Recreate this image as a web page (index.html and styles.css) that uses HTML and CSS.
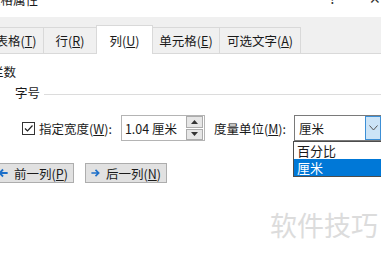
FILE: index.html
```html
<!DOCTYPE html>
<html lang="zh-CN">
<head>
  <meta charset="UTF-8" />
  <title>表格属性</title>
  <link rel="stylesheet" href="styles.css">
</head>
<body>
  <div class="dialog">
    <div class="titlebar">
      <span class="title">表格属性</span>
      <span class="help">?</span>
      <span class="close">✕</span>
    </div>

    <div class="tabs-band">
      <div class="tab t1">表格(<u>T</u>)</div>
      <div class="tab t2">行(<u>R</u>)</div>
      <div class="tab t3 active">列(<u>U</u>)</div>
      <div class="tab t4">单元格(<u>E</u>)</div>
      <div class="tab t5">可选文字(<u>A</u>)</div>
    </div>

    <div class="panel">
      <div class="heading">栏数</div>

      <div class="group">
        <span>字号</span>
        <span class="rule"></span>
      </div>

      <div class="size-row">
        <span class="check">
          <svg width="11" height="11" viewBox="0 0 11 11"><path d="M2 5.5 L4.5 8 L9.5 2.5" fill="none" stroke="#222" stroke-width="1.2"/></svg>
        </span>
        <span class="label">指定宽度(<u>W</u>):</span>
        <div class="spin-box">
          <span class="value">1.04 厘米</span>
          <div class="spinner">
            <span class="spin-btn"><svg width="7" height="4" viewBox="0 0 7 4"><path d="M0 4 L3.5 0 L7 4 Z" fill="#333"/></svg></span>
            <span class="spin-btn"><svg width="7" height="4" viewBox="0 0 7 4"><path d="M0 0 L3.5 4 L7 0 Z" fill="#333"/></svg></span>
          </div>
        </div>
        <span class="label unit-label">度量单位(<u>M</u>):</span>
        <div class="select">
          <span class="value">厘米</span>
          <span class="select-btn">
            <svg width="9" height="6" viewBox="0 0 9 6"><path d="M0.5 0.5 L4.5 5 L8.5 0.5" fill="none" stroke="#555" stroke-width="1"/></svg>
          </span>
          <div class="options">
            <div class="option">百分比</div>
            <div class="option selected">厘米</div>
          </div>
        </div>
      </div>

      <div class="nav-row">
        <button class="nav-btn">
          <svg width="11" height="10" viewBox="0 0 11 10"><path d="M10.5 5 H2 M5.5 1.2 L1.6 5 L5.5 8.8" fill="none" stroke="#1c6fc9" stroke-width="2"/></svg>
          <span>前一列(<u>P</u>)</span>
        </button>
        <button class="nav-btn">
          <svg width="11" height="10" viewBox="0 0 11 10"><path d="M0.5 5 H9 M5.5 1.2 L9.4 5 L5.5 8.8" fill="none" stroke="#1c6fc9" stroke-width="2"/></svg>
          <span>后一列(<u>N</u>)</span>
        </button>
      </div>
    </div>

    <div class="watermark">软件技巧</div>
  </div>
</body>
</html>
```

FILE: styles.css
```css
* {
  box-sizing: border-box;
}

html, body {
  margin: 0;
  height: 100%;
  overflow: hidden;
  background: #fff;
}

body {
  font-family: "Noto Sans CJK SC", "Noto Sans", sans-serif;
  font-size: 12.5px;
  color: #1a1a1a;
}

u {
  text-decoration-thickness: 1px;
  text-underline-offset: 1px;
}

.dialog {
  margin-left: -12px;
  width: 420px;
  height: 254px;
  position: relative;
}

.titlebar {
  height: 17px;
  display: flex;
  align-items: flex-start;
  overflow: hidden;
  background: #fff;
}

.title {
  margin-top: -8px;
  line-height: 16px;
}

.help {
  margin-left: auto;
  margin-top: -10px;
  margin-right: 33px;
  font-size: 14px;
  line-height: 16px;
  color: #333;
}

.close {
  margin-top: -10px;
  margin-right: 27px;
  font-size: 14px;
  line-height: 16px;
  color: #333;
}

.tabs-band {
  height: 37px;
  background: #f0f0f0;
  padding-top: 10px;
  display: flex;
  align-items: flex-start;
  border-bottom: 1px solid #d9d9d9;
}

.tab {
  height: 26px;
  line-height: 25px;
  text-align: center;
  background: #f0f0f0;
  border: 1px solid #d9d9d9;
  border-bottom: none;
  margin-left: -1px;
  white-space: nowrap;
}

.t1 { width: 56px; margin-left: 0; }
.t2 { width: 54px; }
.t3 { width: 57px; }
.t4 { width: 68px; }
.t5 { width: 82px; }

.tab.active {
  background: #fff;
  height: 29px;
  margin-top: -2px;
  line-height: 30px;
  position: relative;
  z-index: 1;
}

.panel {
  padding: 8px 0 0 9px;
}

.heading {
  line-height: 20px;
  margin-left: -6px;
}

.group {
  display: flex;
  align-items: center;
  margin-top: 1px;
  padding-left: 18px;
  line-height: 20px;
}

.rule {
  flex: 1;
  height: 1px;
  background: #dcdcdc;
  margin: 3px 0 0 4px;
}

.size-row {
  display: flex;
  align-items: center;
  margin-top: 12px;
  padding-left: 25px;
  height: 26px;
  white-space: nowrap;
}

.check {
  width: 13px;
  height: 13px;
  border: 1px solid #333;
  display: flex;
  align-items: center;
  justify-content: center;
  background: #fff;
}

.label {
  margin-left: 4px;
}

.spin-box {
  margin-left: 9px;
  width: 84px;
  height: 26px;
  border: 1px solid #b4b4b4;
  display: flex;
  align-items: center;
  padding-left: 3px;
}

.spin-box .value {
  flex: 1;
}

.spinner {
  width: 17px;
  height: 24px;
  display: flex;
  flex-direction: column;
  gap: 1px;
  margin-right: 1px;
}

.spin-btn {
  flex: 1;
  background: #e6e6e6;
  border: 1px solid #acacac;
  display: flex;
  align-items: center;
  justify-content: center;
}

.unit-label {
  margin-left: 9px;
}

.select {
  margin-left: 8px;
  width: 100px;
  height: 26px;
  border: 1px solid #7a7a7a;
  display: flex;
  align-items: center;
  padding-left: 4px;
  position: relative;
}

.select .value {
  flex: 1;
}

.select-btn {
  width: 16px;
  height: 24px;
  margin-right: 12px;
  background: #cce4f7;
  border: 1px solid #3c8fd6;
  display: flex;
  align-items: center;
  justify-content: center;
}

.options {
  position: absolute;
  left: -2px;
  top: 25px;
  width: 102px;
  border: 1px solid #4d4d4d;
  background: #fff;
}

.option {
  height: 17px;
  line-height: 17px;
  padding-left: 3px;
  font-size: 13px;
}

.option.selected {
  background: #0078d7;
  color: #fff;
}

.nav-row {
  display: flex;
  gap: 11px;
  margin-top: 22px;
  margin-left: -5px;
}

.nav-btn {
  height: 20px;
  width: 82px;
  padding: 0 5px;
  background: #e1e1e1;
  border: 1px solid #adadad;
  font-family: inherit;
  font-size: 12.5px;
  color: #1a1a1a;
  display: flex;
  align-items: center;
  gap: 6px;
  white-space: nowrap;
}

.watermark {
  position: absolute;
  left: 282px;
  top: 205px;
  font-size: 27px;
  color: #dcdcdc;
}
```
